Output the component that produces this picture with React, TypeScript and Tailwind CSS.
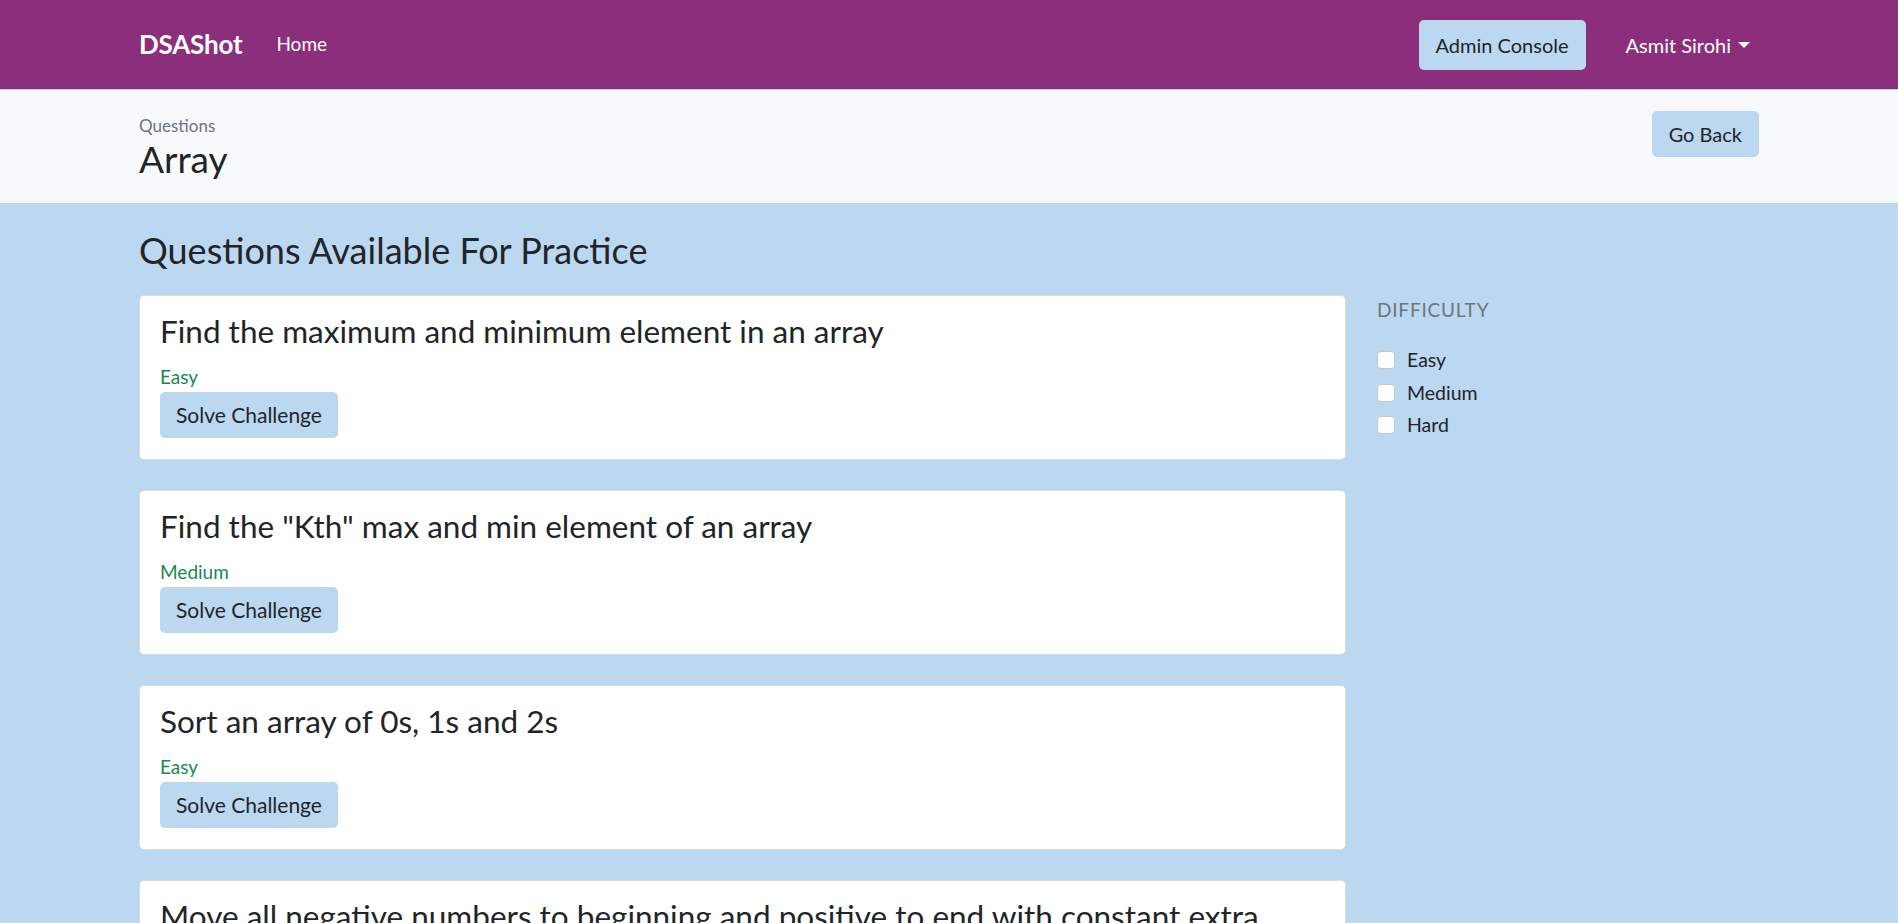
import React from 'react'

const font = { fontFamily: 'Lato, "Noto Sans", sans-serif' }

const questions = [
  { title: 'Find the maximum and minimum element in an array', level: 'Easy' },
  { title: 'Find the "Kth" max and min element of an array', level: 'Medium' },
  { title: 'Sort an array of 0s, 1s and 2s', level: 'Easy' },
  { title: 'Move all negative numbers to beginning and positive to end with constant extra space', level: 'Easy' },
  { title: 'Find the Union and Intersection of the two sorted arrays', level: 'Easy' },
]

function Navbar() {
  return (
    <nav className="h-[90px] border-b border-[#bcd7f0] bg-[#8b2f7c]">
      <div className="mx-auto flex h-full w-[1620px] items-center justify-between">
        <div className="flex items-center">
          <a className="text-[26px] font-bold tracking-[-0.2px] text-white">DSAShot</a>
          <a className="ml-[34px] text-[19px] text-white">Home</a>
        </div>
        <div className="flex items-center">
          <button className="h-[50px] rounded-[5px] bg-[#bcd7f0] px-[17px] text-[20px] text-[#212529]">
            Admin Console
          </button>
          <button className="ml-[40px] flex items-center text-[20px] text-white">
            Asmit Sirohi
            <span className="ml-[7px] mt-[1px] h-0 w-0 border-x-[6px] border-t-[6px] border-x-transparent border-t-white" />
          </button>
          <span className="w-[9px]" />
        </div>
      </div>
    </nav>
  )
}

function PageHeader() {
  return (
    <header className="h-[113px] bg-[#f8f9fa]">
      <div className="mx-auto flex w-[1620px] justify-between">
        <div className="pt-[26px]">
          <p className="text-[17px] leading-[20px] text-[#6c757d]">Questions</p>
          <h1 className="mt-px text-[37px] leading-[44px] text-[#212529]">Array</h1>
        </div>
        <button className="mt-[21px] h-[46px] rounded-[5px] bg-[#bcd7f0] px-[17px] text-[20px] text-[#212529]">
          Go Back
        </button>
      </div>
    </header>
  )
}

function QuestionCard({ title, level }: { title: string; level: string }) {
  return (
    <div className="mb-[30px] rounded-[5px] border border-[#d9dde2] bg-white px-[20px] pb-[21px] pt-[16px]">
      <h3 className="text-[31.5px] leading-[38px] text-[#212529]">{title}</h3>
      <p className="mt-[16px] text-[19px] leading-[22px] text-[#198754]">{level}</p>
      <button className="mt-[4px] h-[46px] rounded-[5px] bg-[#bcd7f0] px-[16px] text-[21px] text-[#212529]">
        Solve Challenge
      </button>
    </div>
  )
}

function Filters() {
  return (
    <aside className="pt-[4px]">
      <h6 className="text-[19px] uppercase leading-[22px] tracking-[0.8px] text-[#6c757d]">Difficulty</h6>
      <div className="mt-[30px] flex flex-col gap-[14.5px]">
        {['Easy', 'Medium', 'Hard'].map((d) => (
          <label key={d} className="flex h-[18px] items-center gap-[12px] text-[19.5px] text-[#212529]">
            <span className="h-[18px] w-[18px] rounded-[4px] border border-[#c5c9cd] bg-white" />
            {d}
          </label>
        ))}
      </div>
    </aside>
  )
}

export default function App() {
  return (
    <div className="min-h-screen bg-[#bcd7f0]" style={font}>
      <Navbar />
      <PageHeader />
      <main className="mx-auto w-[1620px] pt-[25px]">
        <h2 className="text-[36px] leading-[44px] text-[#212529]">Questions Available For Practice</h2>
        <div className="mt-[23px] grid grid-cols-[1207px_1fr] gap-[31px]">
          <div>
            {questions.map((q) => (
              <QuestionCard key={q.title} {...q} />
            ))}
          </div>
          <Filters />
        </div>
      </main>
    </div>
  )
}
